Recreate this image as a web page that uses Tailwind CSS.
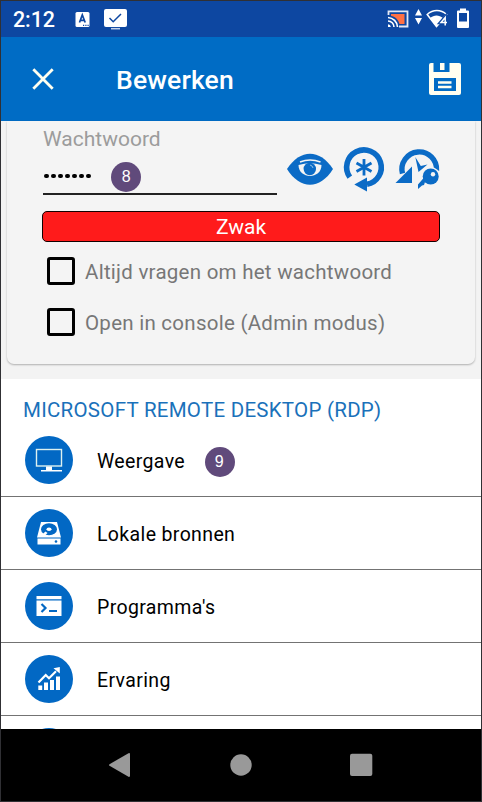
<!DOCTYPE html>
<html lang="nl">
<head>
<meta charset="utf-8">
<title>Bewerken</title>
<script src="https://cdn.jsdelivr.net/npm/@tailwindcss/browser@4"></script>
</head>
<body class="bg-white">
<div class="w-[482px] h-[802px] border border-[#303034] flex flex-col overflow-hidden font-[Roboto,sans-serif] bg-white">
  <!-- Status bar -->
  <header class="h-9 shrink-0 bg-[#0d47a1] flex text-white">
    <div class="pl-3 pt-[5px] w-[74px] text-[21.5px] leading-[28px] font-medium tracking-[-0.1px]">2:12</div>
    <svg class="w-[60px] h-9" viewBox="75 1 60 36" fill="none">
      <rect x="75.500" y="12" width="14" height="15" rx="1.500" fill="#fff"/>
      <path d="M79.500 22.500L82.300 15L85.200 22.500M80.600 20.300H84" stroke="#0d47a1" stroke-width="1.700"/>
      <path d="M83 25.300h1.200M85.300 25.300h1.200M87.500 25.300h1.200" stroke="#0d47a1" stroke-width="1.200"/>
      <rect x="104" y="9" width="23" height="18" rx="2" fill="#fff"/>
      <path d="M111 28.700h9" stroke="#c5d2ea" stroke-width="1.500"/>
      <path d="M109.500 18l3.700 3.700L121 14" stroke="#0d47a1" stroke-width="1.500"/>
    </svg>
    <svg class="w-[96px] h-9 ml-auto" viewBox="385 1 96 36" fill="none">
      <path d="M388.500 15v-3.700h19V26.500h-8.500" stroke="#e4e9f5" stroke-width="1.800"/>
      <path d="M391 14h13.500v10h-5c-1-4-4.500-7.500-8.500-8.200z" fill="#ff7043"/>
      <path d="M388 17.500a10 10 0 0 1 9.500 9.500M388 21a6 6 0 0 1 6 6" stroke="#fff" stroke-width="1.600"/>
      <path d="M388 24.300a3 3 0 0 1 2.800 2.700h-2.800z" fill="#fff"/>
      <path d="M415 15.500l3.500-6.500l3.500 6.500zM415 18l3.500 6.500l3.500-6.500z" fill="#fff"/>
      <path d="M427.200 14.500C433 9.300 440.800 9.300 446.500 14.500L436.500 26.500z" stroke="#fff" stroke-width="1.500"/>
      <path d="M430 18c4-3.500 9-3.500 13 0l-2 4.500-4.500 4.500z" fill="#fff"/>
      <path d="M445.200 25.800V17l-4.700 5.500h6.500" stroke="#0d47a1" stroke-width="3.400"/>
      <path d="M445.200 25.500V17.500l-4.200 5h6" stroke="#fff" stroke-width="1.500"/>
      <path d="M460 8.500h6v2h2q1 0 1 1V27q0 1-1 1h-10q-1 0-1-1V11.500q0-1 1-1h2z" fill="#fff"/>
      <path d="M459 13h8v8.500h-8z" fill="#0d47a1"/>
    </svg>
  </header>
  <!-- App bar -->
  <div class="h-[84px] shrink-0 bg-[#006cc5] flex items-center text-white">
    <svg class="w-[22px] h-[22px] ml-[31px]" viewBox="0 0 22 22"><path d="M1.300 1.300L20.700 20.700M20.700 1.300L1.300 20.700" stroke="#fffff0" stroke-width="2.800"/></svg>
    <h1 class="ml-[62px] pt-px text-[26.500px] leading-8 font-medium tracking-[0.15px]">Bewerken</h1>
    <svg class="w-8 h-8 ml-auto mr-5" viewBox="0 0 32 32">
      <path fill="#fffff0" fill-rule="evenodd" d="M2 0H4.500V9H20.500V0H30Q32 0 32 2V30Q32 32 30 32H2Q0 32 0 30V2Q0 0 2 0ZM11 0H15.500V7H11ZM5 15V28H27V15Z"/>
      <path d="M9 19.500H22.500M9 24H22.500" stroke="#fffff0" stroke-width="2.400"/>
    </svg>
  </div>
  <!-- Password card -->
  <section class="h-[258px] shrink-0 bg-[#f3f3f3] px-[6px]">
    <div class="h-[243px] bg-[#f4f4f4] rounded-b-[7px] shadow-[0_1px_2px_rgba(0,0,0,0.28)] pl-9 pr-[35px] flex flex-col">
      <div class="flex h-[90px]">
        <div class="w-[234px] shrink-0">
          <div class="h-[36px] pt-[5px] text-[21px] leading-[26px] text-[#9c9c9c]"><span>Wachtwoord</span></div>
          <div class="h-[38px] border-b-2 border-[#222] flex items-center">
            <div class="flex gap-[2.200px] mt-[2px] ml-px">
              <i class="size-[4.800px] rounded-full bg-black"></i><i class="size-[4.800px] rounded-full bg-black"></i><i class="size-[4.800px] rounded-full bg-black"></i><i class="size-[4.800px] rounded-full bg-black"></i><i class="size-[4.800px] rounded-full bg-black"></i><i class="size-[4.800px] rounded-full bg-black"></i><i class="size-[4.800px] rounded-full bg-black"></i>
            </div>
            <span class="ml-[20.500px] mt-[3px] size-[30px] rounded-full bg-[#604a7b] text-white text-[16px] leading-[30px] text-center font-['Liberation_Sans',sans-serif]">8</span>
          </div>
        </div>
        <svg class="w-[163px] h-[90px] shrink-0" viewBox="277 121 163 90" fill="none">
          <path d="M287 169C300 148.500 320 148.500 333 169C320 190 300 190 287 169Z" fill="#0b6bc6"/>
          <path d="M300 162Q310 158 320.500 162" stroke="#f4f4f4" stroke-width="1.500"/>
          <path d="M298.500 165Q310 161.500 321.500 165C321.500 179.500 298.500 179.500 298.500 165Z" fill="#f4f4f4"/>
          <circle cx="309.800" cy="169" r="6.200" fill="#0b6bc6"/>
          <path d="M310 165Q312.500 165.500 313 168" stroke="#8fbfe6" stroke-width="1"/>
          <path d="M349.800 177.200A17.300 17.300 0 1 1 367 184.300" stroke="#0b6bc6" stroke-width="5.600"/>
          <path d="M354.300 184.500L367 177.500V191.500Z" fill="#0b6bc6"/>
          <path d="M364 159V175.500M356.500 163L371.500 171.500M371.500 163L356.500 171.500" stroke="#0b6bc6" stroke-width="2.800"/>
          <path d="M402.500 173.500A17.300 17.300 0 1 1 436.500 170.500" stroke="#0b6bc6" stroke-width="5.400"/>
          <path d="M395.500 183L412 166.500V183Z" fill="#0b6bc6"/>
          <path d="M415.300 157L420.800 166L427.500 164.500L418.500 172Z" fill="#0b6bc6"/>
          <circle cx="430.700" cy="176.500" r="9.500" fill="#f4f4f4"/>
          <circle cx="430.700" cy="176.500" r="8" fill="#0b6bc6"/>
          <path d="M424.500 177L418 184.500V189L422 185.500L424 185L425 182L429 182Z" fill="#0b6bc6"/>
          <circle cx="433" cy="174.200" r="2.200" fill="#f4f4f4"/>
        </svg>
      </div>
      <div class="h-[31px] shrink-0 -ml-px border border-[#140000] rounded-[5px] bg-[#ff1b1b] text-white text-[21px] leading-[31px] text-center">Zwak</div>
      <label class="mt-[15px] h-[28px] flex items-center text-[20.500px] tracking-[0.26px] text-[#777]"><span class="ml-[4px] mr-[10px] size-[28px] border-[3px] border-black rounded-[3px]"></span><span class="pt-[2px]">Altijd vragen om het wachtwoord</span></label>
      <label class="mt-[23px] h-[28px] flex items-center text-[20.500px] tracking-[0.26px] text-[#777]"><span class="ml-[4px] mr-[10px] size-[28px] border-[3px] border-black rounded-[3px]"></span><span class="pt-[2px]">Open in console (Admin modus)</span></label>
    </div>
  </section>
  <!-- Settings list -->
  <main class="h-[350px] shrink-0 overflow-hidden bg-white text-black text-[19.500px] leading-[29px] tracking-[0.36px]">
    <h2 class="h-[45px] pl-[22px] pt-[17px] text-[20.500px] leading-[28px] tracking-[0.26px] text-[#1a71ba]"><span>MICROSOFT REMOTE DESKTOP (RDP)</span></h2>
    <div class="h-[73px] border-b border-[#737373] flex items-center pl-6">
      <svg class="size-12" viewBox="0 0 48 48" fill="none"><circle cx="24" cy="24" r="24" fill="#0268c4"/><rect x="11.500" y="13.500" width="25" height="16.500" stroke="#ddf1f0" stroke-width="1.400"/><path d="M21 30.500h6v3.500h-6zM16 34h21v1.400H16z" fill="#fff"/></svg>
      <span class="ml-6 pt-[3px] w-[90px]">Weergave</span>
      <span class="ml-[17.500px] mt-[3px] size-[30px] rounded-full bg-[#604a7b] text-white text-[16px] leading-[30px] text-center font-['Liberation_Sans',sans-serif]">9</span>
    </div>
    <div class="h-[73px] border-b border-[#737373] flex items-center pl-6">
      <svg class="size-12" viewBox="0 0 48 48" fill="none"><circle cx="24" cy="24" r="24" fill="#0268c4"/><path d="M16 13h16l4 15.500H12zM12.500 29.500h23v6h-23z" fill="#fff"/><ellipse cx="24" cy="20.300" rx="8" ry="6" fill="#0268c4"/><ellipse cx="24" cy="20.300" rx="2.500" ry="1.700" fill="#fff"/><path d="M20.500 22.500l-5 4.500h4l3-3z" fill="#fff"/><circle cx="31" cy="32.500" r="1.300" fill="#0268c4"/></svg>
      <span class="ml-6 pt-[3px]">Lokale bronnen</span>
    </div>
    <div class="h-[73px] border-b border-[#737373] flex items-center pl-6">
      <svg class="size-12" viewBox="0 0 48 48" fill="none"><circle cx="24" cy="24" r="24" fill="#0268c4"/><path d="M11.500 14h25v3.200h-25zM11.500 18.500h25V34h-25z" fill="#fff"/><path d="M16.500 22l4 4-4 4M24 29h8" stroke="#0268c4" stroke-width="2.200"/></svg>
      <span class="ml-6 pt-[3px]">Programma's</span>
    </div>
    <div class="h-[73px] border-b border-[#737373] flex items-center pl-6">
      <svg class="size-12" viewBox="0 0 48 48" fill="none"><circle cx="24" cy="24" r="24" fill="#0268c4"/><path d="M13.300 30.500h3.900V35h-3.900zM19 27.500h4V35h-4zM25 25h4v10h-4zM31 21.500h4V35h-4z" fill="#fff"/><path d="M13.500 27.500l7.200-7.500 3.300 3.300 7-7" stroke="#fff" stroke-width="2.200"/><path d="M34.800 12v6.500L28.500 13.300z" fill="#fff"/></svg>
      <span class="ml-6 pt-[3px]">Ervaring</span>
    </div>
    <div class="h-[73px] pl-6 pt-[11.500px]"><div class="size-12 rounded-full bg-[#0268c4]"></div></div>
  </main>
  <!-- Navigation bar -->
  <nav class="h-[72px] shrink-0 bg-black">
    <svg class="w-[480px] h-[72px]" viewBox="1 729 480 72" fill="#999"><path d="M109.500 764.200L128.500 753.200Q130 752.500 130 754.500V775.500Q130 777.500 128.500 776.800L109.500 765.800Q108.500 765 109.500 764.200Z"/><circle cx="241" cy="765" r="10.700"/><rect x="350" y="753.800" width="22.300" height="22.300" rx="2"/></svg>
  </nav>
</div>
</body>
</html>
